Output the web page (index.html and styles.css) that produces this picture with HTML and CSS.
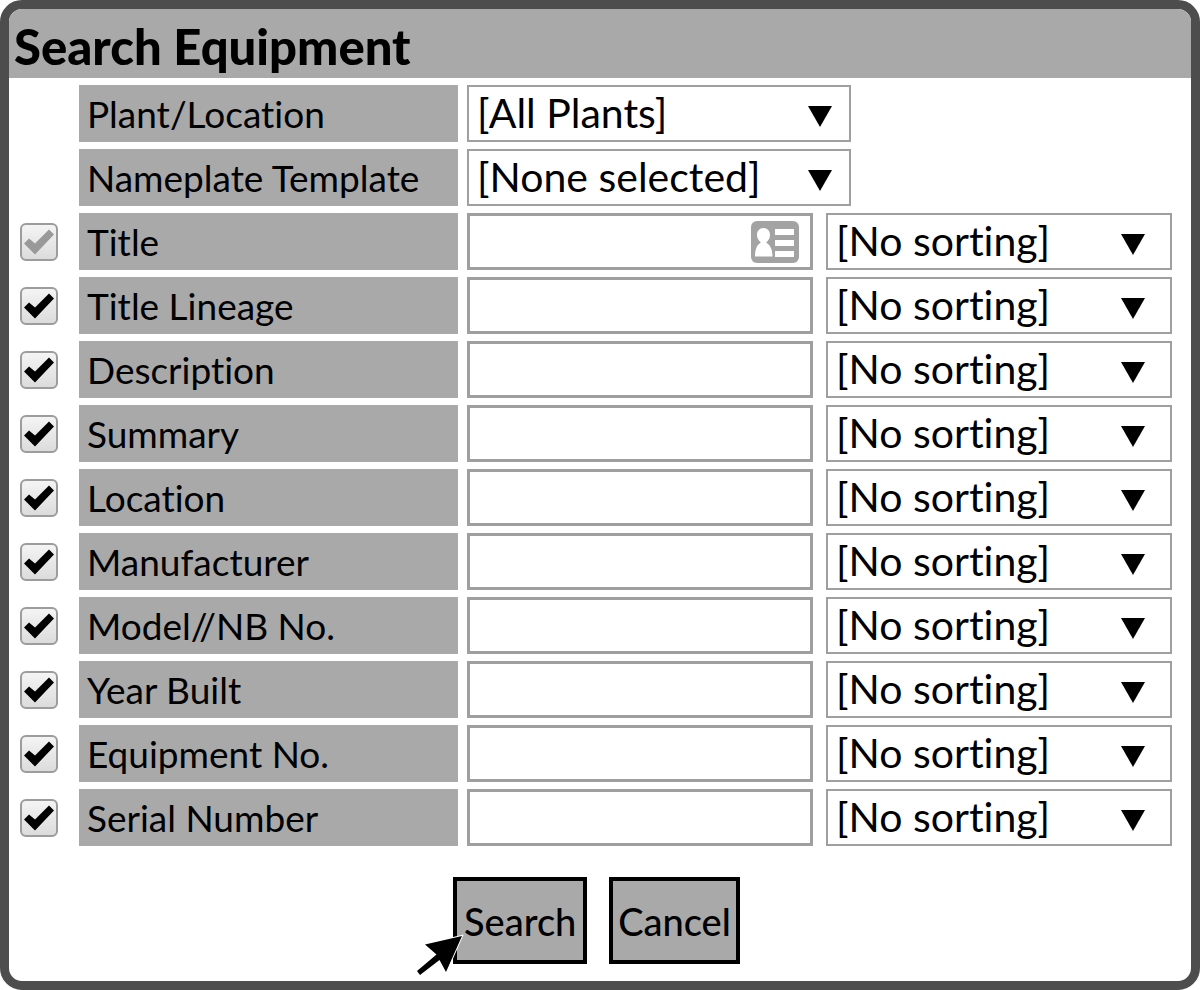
FILE: index.html
```
<!DOCTYPE html>
<html lang="en">
<head>
<meta charset="utf-8">
<title>Search Equipment</title>
<link rel="stylesheet" href="styles.css">
</head>
<body>
<form class="dialog">
  <h1 class="title">Search Equipment</h1>
  <div class="rows">
    <div class="row">
      <label class="name" for="plant">Plant/Location</label>
      <div class="pick wide"><select id="plant"><option>[All Plants]</option></select></div>
    </div>
    <div class="row">
      <label class="name" for="template">Nameplate Template</label>
      <div class="pick wide"><select id="template"><option>[None selected]</option></select></div>
    </div>
    <div class="row">
      <input class="check" type="checkbox" aria-label="Show Title" checked disabled>
      <label class="name" for="f1">Title</label>
      <div class="entry">
        <input class="field" id="f1" type="text">
        <svg class="card" viewBox="0 0 48 42" aria-hidden="true">
          <rect width="48" height="42" rx="6" fill="#a3a3a3"/>
          <g fill="#fff">
            <path d="M12.500 7C8.500 7 6 10 6 14c0 3 1.500 5.500 3.500 7v1C6 24 4 28 4 35.500h17.500C21.500 28 19 24 15.500 22v-1C17.500 19.500 19 17 19 14c0-4-2.500-7-6.500-7z"/>
            <path d="M24 8h19v6H24zM24 19h19v6H24zM24 30h19v6H24z"/>
          </g>
        </svg>
      </div>
      <div class="pick sort"><select aria-label="Sort by Title"><option>[No sorting]</option></select></div>
    </div>
    <div class="row">
      <input class="check" type="checkbox" aria-label="Show Title Lineage" checked>
      <label class="name" for="f2">Title Lineage</label>
      <div class="entry"><input class="field" id="f2" type="text"></div>
      <div class="pick sort"><select aria-label="Sort by Title Lineage"><option>[No sorting]</option></select></div>
    </div>
    <div class="row">
      <input class="check" type="checkbox" aria-label="Show Description" checked>
      <label class="name" for="f3">Description</label>
      <div class="entry"><input class="field" id="f3" type="text"></div>
      <div class="pick sort"><select aria-label="Sort by Description"><option>[No sorting]</option></select></div>
    </div>
    <div class="row">
      <input class="check" type="checkbox" aria-label="Show Summary" checked>
      <label class="name" for="f4">Summary</label>
      <div class="entry"><input class="field" id="f4" type="text"></div>
      <div class="pick sort"><select aria-label="Sort by Summary"><option>[No sorting]</option></select></div>
    </div>
    <div class="row">
      <input class="check" type="checkbox" aria-label="Show Location" checked>
      <label class="name" for="f5">Location</label>
      <div class="entry"><input class="field" id="f5" type="text"></div>
      <div class="pick sort"><select aria-label="Sort by Location"><option>[No sorting]</option></select></div>
    </div>
    <div class="row">
      <input class="check" type="checkbox" aria-label="Show Manufacturer" checked>
      <label class="name" for="f6">Manufacturer</label>
      <div class="entry"><input class="field" id="f6" type="text"></div>
      <div class="pick sort"><select aria-label="Sort by Manufacturer"><option>[No sorting]</option></select></div>
    </div>
    <div class="row">
      <input class="check" type="checkbox" aria-label="Show Model//NB No." checked>
      <label class="name" for="f7">Model//NB No.</label>
      <div class="entry"><input class="field" id="f7" type="text"></div>
      <div class="pick sort"><select aria-label="Sort by Model//NB No."><option>[No sorting]</option></select></div>
    </div>
    <div class="row">
      <input class="check" type="checkbox" aria-label="Show Year Built" checked>
      <label class="name" for="f8">Year Built</label>
      <div class="entry"><input class="field" id="f8" type="text"></div>
      <div class="pick sort"><select aria-label="Sort by Year Built"><option>[No sorting]</option></select></div>
    </div>
    <div class="row">
      <input class="check" type="checkbox" aria-label="Show Equipment No." checked>
      <label class="name" for="f9">Equipment No.</label>
      <div class="entry"><input class="field" id="f9" type="text"></div>
      <div class="pick sort"><select aria-label="Sort by Equipment No."><option>[No sorting]</option></select></div>
    </div>
    <div class="row">
      <input class="check" type="checkbox" aria-label="Show Serial Number" checked>
      <label class="name" for="f10">Serial Number</label>
      <div class="entry"><input class="field" id="f10" type="text"></div>
      <div class="pick sort"><select aria-label="Sort by Serial Number"><option>[No sorting]</option></select></div>
    </div>
  </div>
  <div class="actions">
    <div class="target">
      <button class="button primary" type="button">Search</button>
      <svg class="pointer" viewBox="0 0 50 42" aria-hidden="true">
        <path d="M47 2L10 10.500l11.500 10L2 37l3 4 19.500-15 6.500 12z" fill="#000" stroke="#fff" stroke-width="2" paint-order="stroke"/>
      </svg>
    </div>
    <button class="button" type="button">Cancel</button>
  </div>
</form>
</body>
</html>
```
FILE: styles.css
```
* {
  box-sizing: border-box;
}

body {
  margin: 0;
  background: #fff;
  color: #000;
  font-family: Lato, "Open Sans", sans-serif;
  font-variant-ligatures: none;
}

.dialog {
  border: 9px solid #4d4d4d;
  border-radius: 22px;
  background: #fff;
  overflow: hidden;
}

.title {
  margin: 0;
  padding: 9px 5px 4px;
  background: #a9a9a9;
  font-size: 49px;
  line-height: 56px;
  font-weight: 900;
}

.rows {
  display: grid;
  gap: 7px;
  padding: 7px 19px 0 11px;
}

.row {
  display: grid;
  grid-template-columns: 50px 379fr 346fr 350fr;
  column-gap: 9px;
  align-items: center;
}

.name {
  grid-column: 2;
  height: 57px;
  padding-left: 8px;
  background: #a9a9a9;
  font-size: 37px;
  line-height: 58px;
  white-space: nowrap;
}

.check {
  appearance: none;
  width: 38px;
  height: 38px;
  margin: 0;
  border: 2px solid #9c9c9c;
  border-radius: 6px;
  background: linear-gradient(#f4f4f4, #dcdcdc);
}

.check::before {
  content: "";
  display: block;
  width: 34px;
  height: 34px;
  background: #000;
  clip-path: polygon(2px 19px, 7px 14px, 13px 19px, 27px 5px, 32px 10px, 13px 30px);
}

.check:disabled::before {
  background: #999;
}

.entry,
.pick {
  position: relative;
}

.field {
  display: block;
  width: 100%;
  height: 57px;
  padding: 0 12px;
  border: 3px solid #9f9f9f;
  border-radius: 0;
  background: #fff;
  font: inherit;
  font-size: 41px;
}

.card {
  position: absolute;
  top: 8px;
  right: 14px;
  width: 48px;
  height: 42px;
}

.pick select {
  appearance: none;
  display: block;
  width: 100%;
  height: 57px;
  padding: 0 8px 3px;
  border: 2px solid #9f9f9f;
  border-radius: 0;
  background: #fff;
  color: #000;
  font: inherit;
  font-size: 41px;
  font-variant-ligatures: none;
}

.pick::after {
  content: "";
  position: absolute;
  top: 21px;
  right: 27px;
  width: 24px;
  height: 21px;
  background: #000;
  clip-path: polygon(0 0, 100% 0, 50% 100%);
  pointer-events: none;
}

.wide {
  grid-column: 3 / 5;
  max-width: 384px;
}

.wide::after {
  right: 19px;
}

.sort {
  margin-left: 4px;
}

.actions {
  display: flex;
  justify-content: center;
  gap: 22px;
  padding: 31px 7px 17px 0;
}

.target {
  position: relative;
}

.button {
  height: 87px;
  padding: 0 5px;
  border: 4px solid #000;
  border-radius: 0;
  background: #a9a9a9;
  color: #000;
  font: inherit;
  font-size: 38px;
  font-weight: 500;
}

.primary {
  min-width: 134px;
}

.pointer {
  position: absolute;
  left: -38px;
  bottom: -12px;
  width: 50px;
  height: 42px;
  overflow: visible;
}
```
